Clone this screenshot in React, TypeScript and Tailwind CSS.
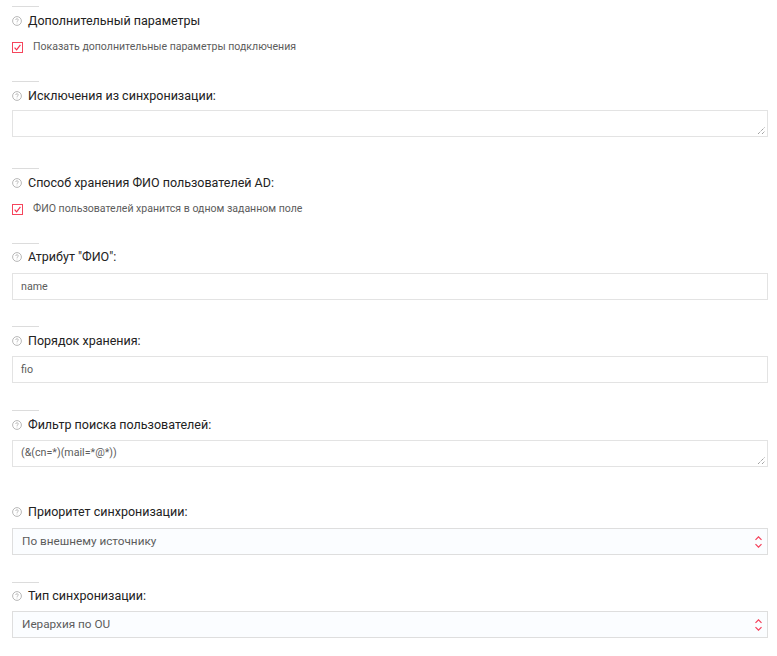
import { ReactNode } from "react";

function Help() {
  return (
    <svg width="10" height="10" viewBox="0 0 10 10" fill="none" className="shrink-0">
      <circle cx="5" cy="5" r="4.4" stroke="#b0b0b0" strokeWidth="0.9" />
      <path d="M3.7 4c0-.8.6-1.3 1.3-1.3s1.3.5 1.3 1.2c0 1-1.3 1-1.3 2" stroke="#b0b0b0" strokeWidth="0.8" />
      <rect x="4.6" y="6.6" width="0.8" height="0.8" fill="#b0b0b0" />
    </svg>
  );
}

function Head({ children, rule = true, tight = false, className = "" }: { children: ReactNode; rule?: boolean; tight?: boolean; className?: string }) {
  return (
    <div className={className}>
      <div className={rule ? "h-px w-[27px] bg-[#dcdcdc]" : "h-px w-[27px]"} />
      <div className={`${tight ? "mt-[5px]" : "mt-[6px]"} flex h-[15px] items-center gap-[6px] text-[12.5px] leading-[15px] text-[#222]`}>
        <Help />
        <span>{children}</span>
      </div>
    </div>
  );
}

function Check({ label }: { label: string }) {
  return (
    <div className="flex h-[12px] items-center text-[10.55px] leading-[12px] text-[#5c5c5c]">
      <span className="flex h-[11px] w-[11px] shrink-0 items-center justify-center border border-[#f5455c] bg-white">
        <svg width="9" height="9" viewBox="0 0 9 9" fill="none">
          <path d="M1.6 4.6 3.6 6.8 7.4 1.8" stroke="#f5304e" strokeWidth="1.2" />
        </svg>
      </span>
      <span className="ml-[10px]">{label}</span>
    </div>
  );
}

function Area({ value }: { value?: string }) {
  return (
    <div className="relative h-[27px] border border-[#e3e3e3] bg-white px-[8px] text-[10.7px] leading-[23px] text-[#5c5c5c]">
      {value}
      <svg width="9" height="9" viewBox="0 0 9 9" className="absolute bottom-[1px] right-[1px]">
        <path d="M1 8 8 1M5 8 8 5" stroke="#777" strokeWidth="1" strokeDasharray="1 1" />
      </svg>
    </div>
  );
}

function Input({ value }: { value: string }) {
  return (
    <div className="h-[27px] border border-[#e3e3e3] bg-white px-[8px] text-[10.7px] leading-[25px] text-[#5c5c5c]">
      {value}
    </div>
  );
}

function Select({ value }: { value: string }) {
  return (
    <div className="flex h-[27px] items-center justify-between border border-[#dedede] bg-[#fbfdff] pl-[9px] pr-[5px] text-[11.75px] text-[#5c5c5c]">
      <span>{value}</span>
      <svg width="7" height="12" viewBox="0 0 7 12" fill="none">
        <path d="M.5 3.8 3.5 .8 6.5 3.8M.5 8.2 3.5 11.2 6.5 8.2" stroke="#f5405a" strokeWidth="1.2" />
      </svg>
    </div>
  );
}

export default function App() {
  return (
    <div className="h-[656px] w-[777px] overflow-hidden bg-white pl-[12px] pr-[9px] pt-[6px] font-['Roboto',sans-serif]">
      <Head>Дополнительный параметры</Head>
      <div className="mt-[13px]">
        <Check label="Показать дополнительные параметры подключения" />
      </div>

      <Head className="mt-[28px]">Исключения из синхронизации:</Head>
      <div className="mt-[7px]">
        <Area />
      </div>

      <Head className="mt-[31px]">Способ хранения ФИО пользователей AD:</Head>
      <div className="mt-[13px]">
        <Check label="ФИО пользователей хранится в одном заданном поле" />
      </div>

      <Head tight className="mt-[28px]">Атрибут "ФИО":</Head>
      <div className="mt-[9px]">
        <Input value="name" />
      </div>

      <Head className="mt-[26px]">Порядок хранения:</Head>
      <div className="mt-[8px]">
        <Input value="fio" />
      </div>

      <Head className="mt-[27px]">Фильтр поиска пользователей:</Head>
      <div className="mt-[8px]">
        <Area value="(&(cn=*)(mail=*@*))" />
      </div>

      <Head rule={false} className="mt-[30px]">Приоритет синхронизации:</Head>
      <div className="mt-[9px]">
        <Select value="По внешнему источнику" />
      </div>

      <Head tight className="mt-[27px]">Тип синхронизации:</Head>
      <div className="mt-[8px]">
        <Select value="Иерархия по OU" />
      </div>
    </div>
  );
}
